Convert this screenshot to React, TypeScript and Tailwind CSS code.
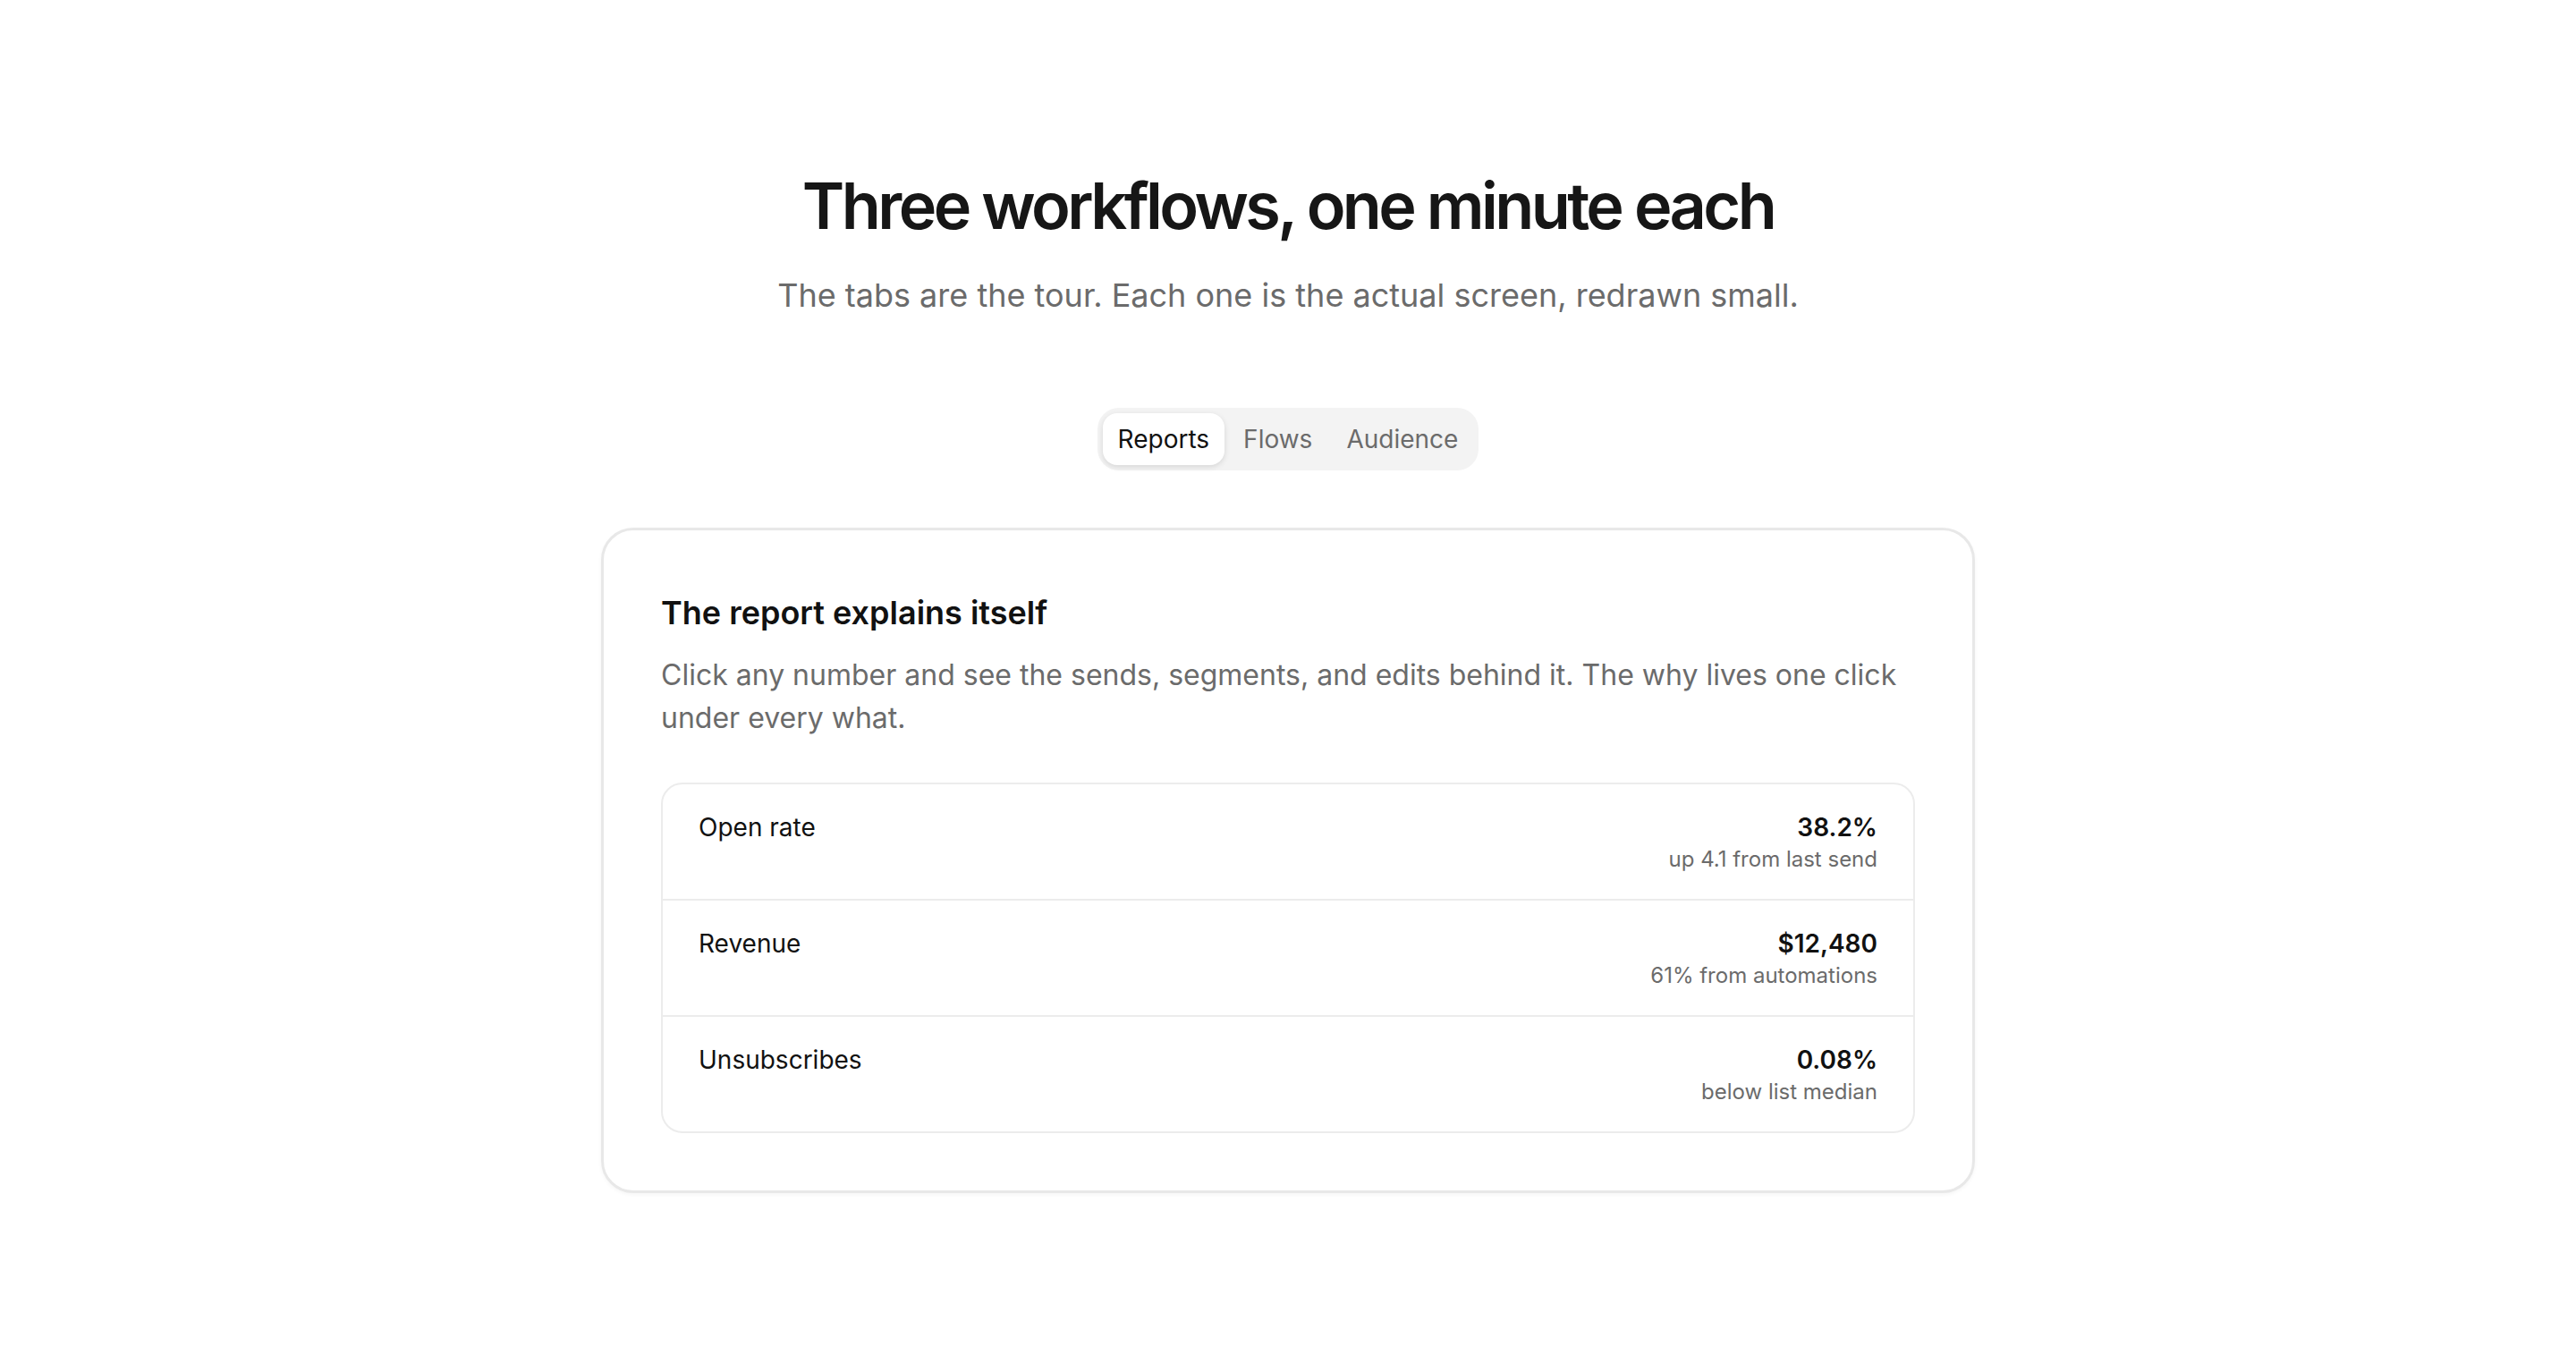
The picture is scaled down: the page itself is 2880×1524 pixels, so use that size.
import React, { useState } from "react";

const rows = [
  { label: "Open rate", value: "38.2%", note: "up 4.1 from last send" },
  { label: "Revenue", value: "$12,480", note: "61% from automations" },
  { label: "Unsubscribes", value: "0.08%", note: "below list median" },
];

export default function App() {
  const [tab, setTab] = useState("Reports");
  const tabs = ["Reports", "Flows", "Audience"];
  return (
    <div
      className="min-h-screen bg-white text-[#111111]"
      style={{ fontFamily: "Inter, 'Noto Sans', sans-serif" }}
    >
      <div className="mx-auto flex max-w-[1536px] flex-col items-center pt-[190px] pb-[192px]">
        <h1 className="text-center text-[72px] leading-[80px] font-semibold tracking-[-0.05em] text-[#161616]">
          Three workflows, one minute each
        </h1>
        <p className="mt-8 text-center text-[36px] leading-[56px] text-[#6b6b6b]">
          The tabs are the tour. Each one is the actual screen, redrawn small.
        </p>

        <div className="mt-[98px] flex items-center gap-[4px] rounded-[24px] bg-[#f3f3f3] p-[6px]">
          {tabs.map((t) => (
            <button
              key={t}
              onClick={() => setTab(t)}
              className={
                t === tab
                  ? "h-[58px] rounded-[16px] bg-white px-[17px] text-[28px] text-[#111111] shadow-[0_2px_6px_rgba(0,0,0,0.12)]"
                  : "h-[58px] rounded-[16px] px-[17px] text-[28px] text-[#6b6b6b]"
              }
            >
              {t}
            </button>
          ))}
        </div>

        <div className="mt-16 w-full rounded-[36px] border-[3px] border-[#e8e8e8] bg-white p-16 shadow-[0_2px_4px_rgba(0,0,0,0.04)]">
          <h2 className="text-[36px] leading-[56px] font-semibold text-[#111111]">
            The report explains itself
          </h2>
          <p className="mt-[18px] text-[32px] leading-[48px] text-[#6b6b6b]">
            Click any number and see the sends, segments, and edits behind it.
            The why lives one click under every what.
          </p>

          <div className="mt-12 overflow-hidden rounded-[24px] border-2 border-[#ececec]">
            {rows.map((r, i) => (
              <div
                key={r.label}
                className={
                  i > 0
                    ? "flex items-start justify-between border-t-2 border-[#ececec] px-10 py-7"
                    : "flex items-start justify-between px-10 py-7"
                }
              >
                <span className="text-[28px] leading-[40px] text-[#111111]">
                  {r.label}
                </span>
                <div className="flex flex-col items-end">
                  <span className="text-[28px] leading-[40px] font-semibold text-[#111111]">
                    {r.value}
                  </span>
                  <span className="text-[24px] leading-[32px] text-[#6b6b6b]">
                    {r.note}
                  </span>
                </div>
              </div>
            ))}
          </div>
        </div>
      </div>
    </div>
  );
}
